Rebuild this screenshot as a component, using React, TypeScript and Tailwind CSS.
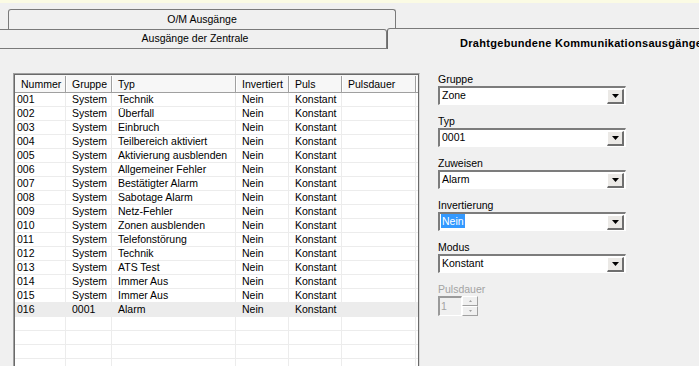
import React from "react";

type Row = {
  nr: string;
  gruppe: string;
  typ: string;
  inv: string;
  puls: string;
  dauer: string;
};

const rows: Row[] = [
  { nr: "001", gruppe: "System", typ: "Technik", inv: "Nein", puls: "Konstant", dauer: "" },
  { nr: "002", gruppe: "System", typ: "Überfall", inv: "Nein", puls: "Konstant", dauer: "" },
  { nr: "003", gruppe: "System", typ: "Einbruch", inv: "Nein", puls: "Konstant", dauer: "" },
  { nr: "004", gruppe: "System", typ: "Teilbereich aktiviert", inv: "Nein", puls: "Konstant", dauer: "" },
  { nr: "005", gruppe: "System", typ: "Aktivierung ausblenden", inv: "Nein", puls: "Konstant", dauer: "" },
  { nr: "006", gruppe: "System", typ: "Allgemeiner Fehler", inv: "Nein", puls: "Konstant", dauer: "" },
  { nr: "007", gruppe: "System", typ: "Bestätigter Alarm", inv: "Nein", puls: "Konstant", dauer: "" },
  { nr: "008", gruppe: "System", typ: "Sabotage Alarm", inv: "Nein", puls: "Konstant", dauer: "" },
  { nr: "009", gruppe: "System", typ: "Netz-Fehler", inv: "Nein", puls: "Konstant", dauer: "" },
  { nr: "010", gruppe: "System", typ: "Zonen ausblenden", inv: "Nein", puls: "Konstant", dauer: "" },
  { nr: "011", gruppe: "System", typ: "Telefonstörung", inv: "Nein", puls: "Konstant", dauer: "" },
  { nr: "012", gruppe: "System", typ: "Technik", inv: "Nein", puls: "Konstant", dauer: "" },
  { nr: "013", gruppe: "System", typ: "ATS Test", inv: "Nein", puls: "Konstant", dauer: "" },
  { nr: "014", gruppe: "System", typ: "Immer Aus", inv: "Nein", puls: "Konstant", dauer: "" },
  { nr: "015", gruppe: "System", typ: "Immer Aus", inv: "Nein", puls: "Konstant", dauer: "" },
  { nr: "016", gruppe: "0001", typ: "Alarm", inv: "Nein", puls: "Konstant", dauer: "" },
];

const emptyRows = [0, 1, 2, 3, 4];

const DropButton = () => (
  <div className="w-[17px] h-[15px] mr-[1px] bg-[#ebe9e6] border-t border-l border-t-white border-l-white border-b-2 border-r-2 border-b-[#6f6f6f] border-r-[#6f6f6f] flex items-center justify-center">
    <svg width="7" height="4" viewBox="0 0 7 4">
      <path d="M0 0H7L3.5 4Z" fill="#000" />
    </svg>
  </div>
);

const Combo = ({ value, selected }: { value: string; selected?: boolean }) => (
  <div className="w-[188px] h-[19px] border-t-2 border-l-2 border-t-[#7c7c7c] border-l-[#7c7c7c] border-b border-r border-b-white border-r-white bg-white flex items-center">
    <div className="flex-1 pl-[1px]">
      {selected ? (
        <span className="bg-[#3399ff] text-white px-[1px] leading-[14px] inline-block">{value}</span>
      ) : (
        <span className="px-[1px]">{value}</span>
      )}
    </div>
    <DropButton />
  </div>
);

const Field = ({ label, value, selected }: { label: string; value: string; selected?: boolean }) => (
  <div className="flex flex-col">
    <div className="h-[13px] leading-[13px]">{label}</div>
    <Combo value={value} selected={selected} />
  </div>
);

const cols = [
  { key: "nr", w: "w-[51px]", head: "Nummer", pad: "pl-[2px]" },
  { key: "gruppe", w: "w-[46px]", head: "Gruppe", pad: "pl-[6px]" },
  { key: "typ", w: "w-[124px]", head: "Typ", pad: "pl-[6px]" },
  { key: "inv", w: "w-[53px]", head: "Invertiert", pad: "pl-[6px]" },
  { key: "puls", w: "w-[53px]", head: "Puls", pad: "pl-[6px]" },
  { key: "dauer", w: "w-[74px]", head: "Pulsdauer", pad: "pl-[6px]" },
] as const;

export default function App() {
  return (
    <div
      className="w-[699px] h-[366px] overflow-hidden bg-[#f0f0f0] text-black text-[10.5px]"
      style={{ fontFamily: '"Liberation Sans", Arial, sans-serif' }}
    >
      <div className="h-[3px] bg-[#fbfbe4]" />
      {/* tab rows */}
      <div className="h-[6px]" />
      <div className="flex h-[20px]">
        <div className="ml-[8px] w-[388px] border-t border-l border-r border-[#7a7a7a] rounded-t-[3px] flex items-center justify-center pt-[1px]">
          O/M Ausgänge
        </div>
      </div>
      <div className="flex h-[20px]">
        <div className="w-[387px] border-t border-r border-b border-[#7a7a7a] rounded-tr-[3px] flex items-center justify-center pl-[4px]">
          Ausgänge der Zentrale
        </div>
        <div className="flex-1 border-t border-l border-[#7a7a7a] border-l-[#6a6a6a] rounded-tl-[3px] -mt-[1px] h-[21px] overflow-hidden whitespace-nowrap pl-[72px] pt-[6px] font-bold text-[11px] tracking-[0.3px]">
          Drahtgebundene Kommunikationsausgänge
        </div>
      </div>

      {/* page content */}
      <div className="flex items-start pl-[13px] pt-[24px]">
        <div className="w-[407px] h-[310px] shrink-0 border border-[#a0a0a0] border-r-[#d8d8d8] border-b-[#d8d8d8]">
          <div className="h-full border border-[#6a6a6a] bg-white overflow-hidden">
            <div className="flex h-[18px] pt-[1px] bg-[#f7f7f7] border-b border-[#a0a0a0]">
              {cols.map((c) => (
                <div
                  key={c.key}
                  className={`${c.w} pl-[6px] leading-[16px] border-r border-r-[#a0a0a0] shadow-[1px_0_0_#ffffff] whitespace-nowrap overflow-hidden`}
                >
                  {c.head}
                </div>
              ))}
            </div>
            {rows.map((r, i) => (
              <div
                key={r.nr}
                className={`flex h-[14px] border-b border-[#ececec] ${i === rows.length - 1 ? "bg-[#ececec]" : ""}`}
              >
                {cols.map((c) => (
                  <div
                    key={c.key}
                    className={`${c.w} ${c.pad} leading-[13px] border-r border-[#ececec] whitespace-nowrap overflow-hidden`}
                  >
                    {r[c.key]}
                  </div>
                ))}
              </div>
            ))}
            {emptyRows.map((e) => (
              <div key={e} className="flex h-[14px] border-b border-[#ececec]">
                {cols.map((c) => (
                  <div key={c.key} className={`${c.w} border-r border-[#ececec]`} />
                ))}
              </div>
            ))}
          </div>
        </div>

        <div className="ml-[18px] flex flex-col gap-[10px]">
          <Field label="Gruppe" value="Zone" />
          <Field label="Typ" value="0001" />
          <Field label="Zuweisen" value="Alarm" />
          <Field label="Invertierung" value="Nein" selected />
          <Field label="Modus" value="Konstant" />
          <div className="flex flex-col">
            <div className="h-[13px] leading-[13px] text-[#a3a3a3]">Pulsdauer</div>
            <div className="flex">
              <div className="w-[24px] h-[20px] border-t-2 border-l-2 border-[#9a9a9a] border-b border-r border-b-white border-r-white bg-[#f0f0f0] text-[#a3a3a3] pl-[1px] leading-[16px]">
                1
              </div>
              <div className="flex flex-col">
                <div className="w-[16px] h-[10px] border border-t-white border-l-white border-b-[#a0a0a0] border-r-[#a0a0a0] flex items-center justify-center">
                  <svg width="3" height="2" viewBox="0 0 3 2">
                    <path d="M0 2H3L1.5 0Z" fill="#a0a0a0" />
                  </svg>
                </div>
                <div className="w-[16px] h-[10px] border border-t-white border-l-white border-b-[#a0a0a0] border-r-[#a0a0a0] flex items-center justify-center">
                  <svg width="3" height="2" viewBox="0 0 3 2">
                    <path d="M0 0H3L1.5 2Z" fill="#a0a0a0" />
                  </svg>
                </div>
              </div>
            </div>
          </div>
        </div>
      </div>
    </div>
  );
}
